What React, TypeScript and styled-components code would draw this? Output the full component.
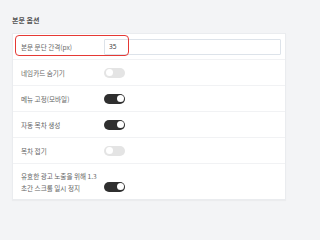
import styled, { createGlobalStyle } from 'styled-components';

const GlobalStyle = createGlobalStyle`
  html, body {
    margin: 0;
    padding: 0;
    background: #f3f4f6;
  }
  body {
    font-family: 'Noto Sans CJK KR', 'Noto Sans', sans-serif;
  }
`;

interface OptionRow {
  label: string[];
  kind: 'input' | 'toggle';
  value?: string;
  on?: boolean;
  highlight?: boolean;
}

const rows: OptionRow[] = [
  { label: ['본문 문단 간격(px)'], kind: 'input', value: '35', highlight: true },
  { label: ['네임카드 숨기기'], kind: 'toggle', on: false },
  { label: ['메뉴 고정(모바일)'], kind: 'toggle', on: true },
  { label: ['자동 목차 생성'], kind: 'toggle', on: true },
  { label: ['목차 접기'], kind: 'toggle', on: false },
  { label: ['유효한 광고 노출을 위해 1.3', '초간 스크롤 일시 정지'], kind: 'toggle', on: true },
];

export default function App() {
  return (
    <>
      <GlobalStyle />
      <Page>
        <Title>본문 옵션</Title>
        <Card>
          {rows.map((row) => {
            const tall = row.label.length > 1;
            return (
              <Row key={row.label.join('')} $tall={tall}>
                {row.highlight && <Highlight />}
                <Label>
                  {row.label.map((line) => (
                    <span key={line}>{line}</span>
                  ))}
                </Label>
                {row.kind === 'input' ? (
                  <TextInput defaultValue={row.value} />
                ) : (
                  <Toggle $on={!!row.on} $low={tall}>
                    <Knob $on={!!row.on} />
                  </Toggle>
                )}
              </Row>
            );
          })}
        </Card>
      </Page>
    </>
  );
}

const Page = styled.div`
  width: 300px;
  height: 207px;
  box-sizing: border-box;
  padding: 15px 14px 0 12px;
`;

const Title = styled.h3`
  margin: 0 0 7px;
  font-size: 7px;
  line-height: 11px;
  font-weight: 700;
  color: #555;
`;

const Card = styled.div`
  background: #fff;
  border: 1px solid #eaecef;
  box-shadow: 0 1px 1px rgba(0, 0, 0, 0.03);
`;

const Row = styled.div<{ $tall?: boolean }>`
  position: relative;
  display: flex;
  align-items: center;
  height: ${({ $tall }) => ($tall ? '35px' : '25px')};
  padding: 0 4px 0 8px;
  border-bottom: 1px solid #f1f2f4;

  &:last-child {
    border-bottom: none;
  }
`;

const Highlight = styled.div`
  position: absolute;
  left: 2px;
  top: 1px;
  width: 114px;
  height: 21px;
  box-sizing: border-box;
  border: 1px solid #e53935;
  border-radius: 4px;
  pointer-events: none;
`;

const Label = styled.div`
  display: flex;
  flex-direction: column;
  width: 75px;
  margin-right: 8px;
  flex-shrink: 0;
  font-size: 6.6px;
  line-height: 12px;
  color: #666;
  white-space: nowrap;
`;

const TextInput = styled.input`
  flex: 1;
  height: 16px;
  box-sizing: border-box;
  padding: 0 4px;
  border: 1px solid #dde3ea;
  border-radius: 1px;
  font-family: 'Noto Sans', sans-serif;
  font-size: 6.6px;
  color: #444;
  outline: none;
`;

const Toggle = styled.div<{ $on: boolean; $low?: boolean }>`
  position: relative;
  width: 21px;
  height: 10px;
  border-radius: 5px;
  background: ${({ $on }) => ($on ? '#2f2f2f' : '#e4e4e4')};
  margin-top: ${({ $low }) => ($low ? '10px' : '0')};
`;

const Knob = styled.span<{ $on: boolean }>`
  position: absolute;
  top: 1.5px;
  left: ${({ $on }) => ($on ? '12.5px' : '1.5px')};
  width: 7px;
  height: 7px;
  border-radius: 50%;
  background: #fff;
`;
